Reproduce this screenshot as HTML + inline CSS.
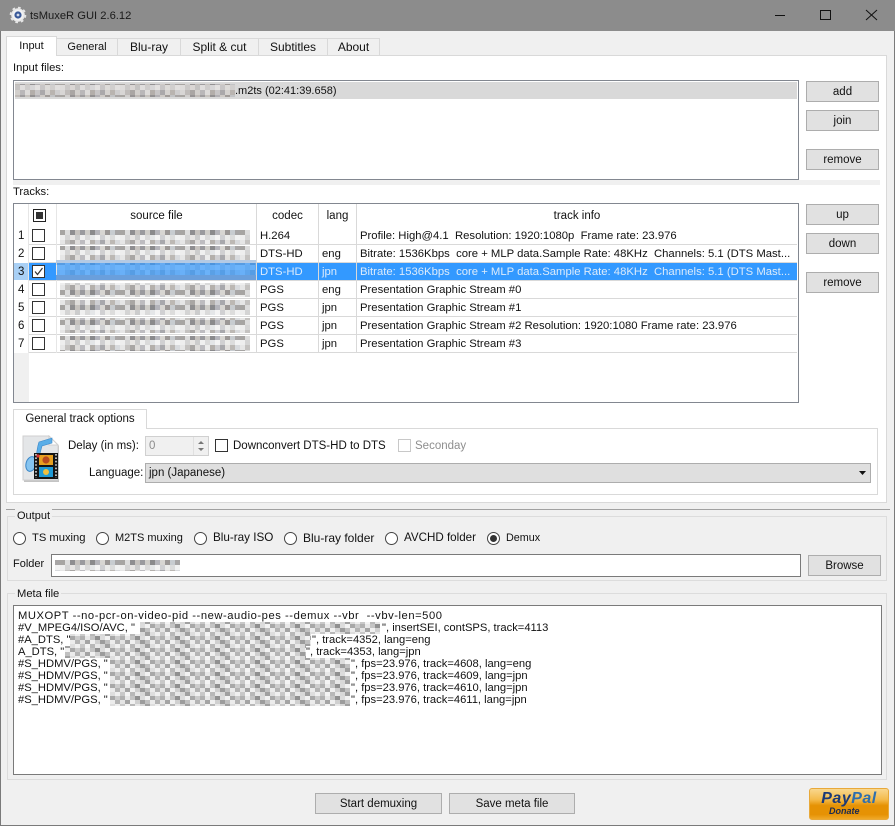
<!DOCTYPE html>
<html><head><meta charset="utf-8"><style>
html,body{margin:0;padding:0;width:895px;height:826px;overflow:hidden;background:#f0f0f0}
body{position:relative;font:11.5px/16px "Liberation Sans",sans-serif;color:#111}
div,span.t{position:absolute;box-sizing:border-box}
svg{position:absolute}
.t{white-space:nowrap;height:16px}
.g{font-size:11.3px}
.b{background:#e1e1e1;border:1px solid #adadad;text-align:center;line-height:21px;width:73px;height:21px}
.cb{width:13px;height:13px;border:1px solid #333;background:#fff}
.r{width:13px;height:13px;border:1px solid #444;border-radius:50%;background:#fff;top:532px}
.hl{height:1px;background:#d9d9d9;left:29px;width:768px}
.bg{background:#f0f0f0;border:1px solid #dcdcdc}
.tab{top:38px;height:18px;background:#f0f0f0;border:1px solid #d9d9d9;text-align:center;line-height:16px;font-size:12px}
.m{font-size:11.2px;line-height:14px;height:14px;left:18px}
.w{color:#dcebfb}
</style></head><body>
<!-- window frame and title -->
<div style="left:0;top:0;width:895px;height:826px;border:1px solid #7a7a7a;border-top:0"></div>
<div style="left:0;top:0;width:895px;height:31px;background:#8c8c8c"></div>
<svg style="left:9px;top:6px" width="18" height="18" viewBox="0 0 18 18"><circle cx="9" cy="9" r="6.8" fill="#e8e8e8" stroke="#e4e4e4" stroke-width="3" stroke-dasharray="2.5 2.8"/><circle cx="9" cy="9" r="5.4" fill="#f2f2f2"/><circle cx="9" cy="9" r="3.6" fill="#3a5a9a"/><circle cx="9" cy="9" r="1.4" fill="#d4dcec"/></svg>
<span class="t" style="left:30px;top:8px;font-size:11.2px;color:#1a1a1a;letter-spacing:0">tsMuxeR GUI 2.6.12</span>
<div style="left:775px;top:15px;width:10px;height:1px;background:#111"></div>
<div style="left:820px;top:10px;width:11px;height:10px;border:1px solid #111"></div>
<svg style="left:865px;top:9px" width="13" height="12"><path d="M1 1L12 11M12 1L1 11" stroke="#111" fill="none"/></svg>

<!-- tabs -->
<div style="left:6px;top:55px;width:881px;height:448px;background:#fff;border:1px solid #d9d9d9"></div>
<div class="tab" style="left:56px;width:62px;font-size:11px">General</div>
<div class="tab" style="left:117px;width:64px">Blu-ray</div>
<div class="tab" style="left:180px;width:79px">Split &amp; cut</div>
<div class="tab" style="left:258px;width:70px">Subtitles</div>
<div class="tab" style="left:327px;width:53px">About</div>
<div class="tab" style="left:6px;top:36px;width:51px;height:20px;background:#fff;border-bottom:0;line-height:18px;font-size:11px">Input</div>

<!-- input files -->
<span class="t" style="left:13px;top:60px;font-size:11.2px">Input files:</span>
<div style="left:13px;top:80px;width:786px;height:100px;border:1px solid #828790;background:#fff"></div>
<div style="left:15px;top:82px;width:782px;height:17px;background:#d9d9d9"></div>
<span class="t" style="left:235px;top:83px;font-size:11px">.m2ts (02:41:39.658)</span>
<div class="b" style="left:806px;top:81px">add</div>
<div class="b" style="left:806px;top:110px">join</div>
<div class="b" style="left:806px;top:149px">remove</div>
<div style="left:13px;top:180px;width:867px;height:5px;background:#f0f0f0"></div>

<!-- tracks -->
<span class="t" style="left:13px;top:184px;font-size:11.2px">Tracks:</span>
<div style="left:13px;top:203px;width:786px;height:200px;border:1px solid #828790;background:#fff"></div>
<div style="left:14px;top:353px;width:15px;height:49px;background:#f0f0f0"></div>
<div style="left:14px;top:263px;width:15px;height:17px;background:#a9d0f5"></div>
<div style="left:29px;top:263px;width:768px;height:17px;background:#3399ff"></div>
<div class="hl" style="top:244px"></div>
<div class="hl" style="top:262px"></div>
<div class="hl" style="top:280px"></div>
<div class="hl" style="top:298px"></div>
<div class="hl" style="top:316px"></div>
<div class="hl" style="top:334px"></div>
<div class="hl" style="top:352px"></div>
<div style="left:28px;top:204px;width:1px;height:149px;background:#e6e6e6"></div>
<div style="left:56px;top:204px;width:1px;height:149px;background:#e6e6e6"></div>
<div style="left:256px;top:204px;width:1px;height:149px;background:#d9d9d9"></div>
<div style="left:318px;top:204px;width:1px;height:149px;background:#d9d9d9"></div>
<div style="left:356px;top:204px;width:1px;height:149px;background:#d9d9d9"></div>
<div class="cb" style="left:33px;top:209px;border-color:#222"></div>
<div style="left:36px;top:212px;width:7px;height:7px;background:#333"></div>
<span class="t" style="left:57px;width:199px;text-align:center;top:208px">source file</span>
<span class="t" style="left:257px;width:61px;text-align:center;top:208px">codec</span>
<span class="t" style="left:319px;width:37px;text-align:center;top:208px">lang</span>
<span class="t" style="left:357px;width:440px;text-align:center;top:208px">track info</span>

<!-- pixelated redaction blocks -->
<svg style="left:0;top:0" width="895" height="826">
<defs>
<pattern id="p" patternUnits="userSpaceOnUse" width="60" height="15">
<rect width="60" height="15" fill="#d6d4d2"/>
<rect x="0" width="5" height="5" fill="#e6e6e6"/><rect x="5" width="5" height="5" fill="#c4c2c0"/><rect x="10" width="5" height="5" fill="#a9a6a4"/><rect x="15" width="5" height="5" fill="#dedcda"/><rect x="20" width="5" height="5" fill="#bdbcc0"/><rect x="25" width="5" height="5" fill="#ececec"/><rect x="30" width="5" height="5" fill="#b4b0ac"/><rect x="35" width="5" height="5" fill="#cfcfd2"/><rect x="40" width="5" height="5" fill="#a8a8ac"/><rect x="45" width="5" height="5" fill="#e2e0de"/><rect x="50" width="5" height="5" fill="#bcb8b4"/><rect x="55" width="5" height="5" fill="#d8dadd"/>
<rect x="0" y="5" width="5" height="5" fill="#a6a4a2"/><rect x="5" y="5" width="5" height="5" fill="#dcdcdc"/><rect x="10" y="5" width="5" height="5" fill="#8f8e90"/><rect x="15" y="5" width="5" height="5" fill="#c6c2be"/><rect x="20" y="5" width="5" height="5" fill="#9a9a9e"/><rect x="25" y="5" width="5" height="5" fill="#cfcdc9"/><rect x="30" y="5" width="5" height="5" fill="#8a8a8c"/><rect x="35" y="5" width="5" height="5" fill="#b4b4ba"/><rect x="40" y="5" width="5" height="5" fill="#d8d6d2"/><rect x="45" y="5" width="5" height="5" fill="#9c9896"/><rect x="50" y="5" width="5" height="5" fill="#c8ccd0"/><rect x="55" y="5" width="5" height="5" fill="#a8a6a6"/>
<rect x="0" y="10" width="5" height="5" fill="#eeeeee"/><rect x="5" y="10" width="5" height="5" fill="#d4d4d4"/><rect x="10" y="10" width="5" height="5" fill="#e8e6e4"/><rect x="15" y="10" width="5" height="5" fill="#cccccc"/><rect x="20" y="10" width="5" height="5" fill="#f0f0f0"/><rect x="25" y="10" width="5" height="5" fill="#dadada"/><rect x="30" y="10" width="5" height="5" fill="#e4e6e8"/><rect x="35" y="10" width="5" height="5" fill="#f4f4f4"/><rect x="40" y="10" width="5" height="5" fill="#d0d0d2"/><rect x="45" y="10" width="5" height="5" fill="#ececea"/><rect x="50" y="10" width="5" height="5" fill="#dcdcdc"/><rect x="55" y="10" width="5" height="5" fill="#f2f2f2"/>
</pattern>
<pattern id="q" patternUnits="userSpaceOnUse" width="40" height="12">
<rect width="40" height="12" fill="#d4d4d4"/>
<rect width="5" height="4" fill="#b0b0b0"/><rect x="5" width="5" height="4" fill="#e8e8e8"/><rect x="10" width="5" height="4" fill="#c4c4c4"/><rect x="15" width="5" height="4" fill="#909090"/><rect x="20" width="5" height="4" fill="#dcdcdc"/><rect x="25" width="5" height="4" fill="#f2f2f2"/><rect x="30" width="5" height="4" fill="#a8a8a8"/><rect x="35" width="5" height="4" fill="#cccccc"/>
<rect y="4" width="5" height="4" fill="#e4e4e4"/><rect x="5" y="4" width="5" height="4" fill="#a4a4a4"/><rect x="10" y="4" width="5" height="4" fill="#f0f0f0"/><rect x="15" y="4" width="5" height="4" fill="#d0d0d0"/><rect x="20" y="4" width="5" height="4" fill="#9c9c9c"/><rect x="25" y="4" width="5" height="4" fill="#c0c0c0"/><rect x="30" y="4" width="5" height="4" fill="#ececec"/><rect x="35" y="4" width="5" height="4" fill="#b4b4b4"/>
<rect y="8" width="5" height="4" fill="#c8c8c8"/><rect x="5" y="8" width="5" height="4" fill="#f4f4f4"/><rect x="10" y="8" width="5" height="4" fill="#b8b8b8"/><rect x="15" y="8" width="5" height="4" fill="#e8e8e8"/><rect x="20" y="8" width="5" height="4" fill="#d8d8d8"/><rect x="25" y="8" width="5" height="4" fill="#a0a0a0"/><rect x="30" y="8" width="5" height="4" fill="#dedede"/><rect x="35" y="8" width="5" height="4" fill="#f0f0f0"/>
</pattern>
</defs>
<rect x="15" y="84" width="220" height="13" fill="url(#p)"/>
<rect x="15" y="84" width="220" height="13" fill="#b0a8a2" opacity=".25"/>
<rect x="60" y="230" width="190" height="14" fill="url(#p)"/>
<rect x="60" y="246" width="190" height="15" fill="url(#p)"/>
<rect x="60" y="283" width="190" height="14" fill="url(#p)"/>
<rect x="60" y="300" width="190" height="15" fill="url(#p)"/>
<rect x="60" y="318" width="190" height="15" fill="url(#p)"/>
<rect x="60" y="336" width="190" height="15" fill="url(#p)"/>
<rect x="56" y="260" width="200" height="3" fill="#b4cae4"/>
<rect x="56" y="263" width="200" height="12" fill="url(#p)" opacity=".3"/>
<rect x="56" y="275" width="200" height="5" fill="#6a9fdc"/>
</svg>

<!-- row numbers -->
<span class="t" style="left:18px;top:228px">1</span><span class="t" style="left:18px;top:246px">2</span><span class="t" style="left:18px;top:264px">3</span><span class="t" style="left:18px;top:282px">4</span><span class="t" style="left:18px;top:300px">5</span><span class="t" style="left:18px;top:318px">6</span><span class="t" style="left:18px;top:336px">7</span>
<!-- row checkboxes -->
<div class="cb" style="left:32px;top:229px"></div><div class="cb" style="left:32px;top:247px"></div>
<div class="cb" style="left:32px;top:265px"></div>
<svg style="left:32px;top:265px" width="13" height="13"><path d="M3 6.5L5.5 9.5L10.5 3" stroke="#333" stroke-width="1.2" fill="none"/></svg>
<div class="cb" style="left:32px;top:283px"></div><div class="cb" style="left:32px;top:301px"></div><div class="cb" style="left:32px;top:319px"></div><div class="cb" style="left:32px;top:337px"></div>
<!-- codec -->
<span class="t g" style="left:260px;top:228px">H.264</span>
<span class="t g" style="left:260px;top:246px">DTS-HD</span>
<span class="t g w" style="left:260px;top:264px">DTS-HD</span>
<span class="t g" style="left:260px;top:282px">PGS</span>
<span class="t g" style="left:260px;top:300px">PGS</span>
<span class="t g" style="left:260px;top:318px">PGS</span>
<span class="t g" style="left:260px;top:336px">PGS</span>
<!-- lang -->
<span class="t g" style="left:322px;top:246px">eng</span>
<span class="t g w" style="left:322px;top:264px">jpn</span>
<span class="t g" style="left:322px;top:282px">eng</span>
<span class="t g" style="left:322px;top:300px">jpn</span>
<span class="t g" style="left:322px;top:318px">jpn</span>
<span class="t g" style="left:322px;top:336px">jpn</span>
<!-- info -->
<span class="t g" style="left:360px;top:228px">Profile: High@4.1&nbsp; Resolution: 1920:1080p&nbsp; Frame rate: 23.976</span>
<span class="t g" style="left:360px;top:246px">Bitrate: 1536Kbps&nbsp; core + MLP data.Sample Rate: 48KHz&nbsp; Channels: 5.1 (DTS Mast...</span>
<span class="t g w" style="left:360px;top:264px">Bitrate: 1536Kbps&nbsp; core + MLP data.Sample Rate: 48KHz&nbsp; Channels: 5.1 (DTS Mast...</span>
<span class="t g" style="left:360px;top:282px">Presentation Graphic Stream #0</span>
<span class="t g" style="left:360px;top:300px">Presentation Graphic Stream #1</span>
<span class="t g" style="left:360px;top:318px">Presentation Graphic Stream #2 Resolution: 1920:1080 Frame rate: 23.976</span>
<span class="t g" style="left:360px;top:336px">Presentation Graphic Stream #3</span>
<div class="b" style="left:806px;top:204px">up</div>
<div class="b" style="left:806px;top:233px">down</div>
<div class="b" style="left:806px;top:272px">remove</div>

<!-- general track options -->
<div style="left:13px;top:428px;width:865px;height:67px;border:1px solid #d9d9d9;background:#fff"></div>
<div style="left:13px;top:409px;width:134px;height:20px;border:1px solid #d9d9d9;border-bottom:0;background:#fff;text-align:center;line-height:18px;z-index:1">General track options</div>
<svg style="left:22px;top:435px" width="38" height="49" viewBox="0 0 38 49">
<path d="M2 2H28L37 11V47H2Z" fill="#c4c4c4"/>
<path d="M1 1H27L36 10V45H1Z" fill="#e4e6e8" stroke="#cfcfcf"/><path d="M27 1V10H36Z" fill="#fff" stroke="#cfcfcf"/>
<path d="M13 32C14 22 15 12 17 7L30 3V8L20 11C18 18 16 28 14 34" fill="#5aaee8" stroke="#3d88c8" stroke-width=".6"/>
<ellipse cx="9" cy="29" rx="5" ry="7.5" fill="#86c4f0" stroke="#3d88c8" transform="rotate(15 9 29)"/>
<rect x="12" y="18" width="24" height="26" fill="#151515"/>
<path d="M14 19V43M34 19V43" stroke="#ddd" stroke-width="1.6" stroke-dasharray="1.6 1.8"/>
<rect x="17" y="20" width="14" height="10" fill="#e8a020"/><rect x="17" y="32" width="14" height="10" fill="#1f9ad6"/>
<circle cx="24" cy="25" r="3.6" fill="#b84a1f"/><circle cx="24" cy="37" r="3" fill="#f0c040"/><circle cx="16" cy="21" r="1.6" fill="#d83030"/></svg>
<span class="t" style="left:68px;top:438px">Delay (in ms):</span>
<div style="left:145px;top:436px;width:64px;height:20px;background:#f0f0f0;border:1px solid #d0d0d0"></div>
<span class="t" style="left:149px;top:438px;color:#8c8c8c">0</span>
<div style="left:193px;top:437px;width:1px;height:18px;background:#e0e0e0"></div>
<svg style="left:194px;top:438px" width="14" height="16"><path d="M4 6L7 3L10 6ZM4 10L7 13L10 10Z" fill="#777"/></svg>
<div class="cb" style="left:215px;top:439px"></div>
<span class="t" style="left:233px;top:438px">Downconvert DTS-HD to DTS</span>
<div class="cb" style="left:398px;top:439px;border-color:#c8c8c8"></div>
<span class="t" style="left:415px;top:438px;color:#8e8e8e">Seconday</span>
<span class="t" style="left:89px;top:465px">Language:</span>
<div style="left:145px;top:463px;width:726px;height:20px;background:#dfdfdf;border:1px solid #adadad"></div>
<span class="t" style="left:149px;top:465px">jpn (Japanese)</span>
<svg style="left:858px;top:470px" width="9" height="6"><path d="M1 1H8L4.5 5Z" fill="#111"/></svg>

<!-- output group -->
<div style="left:6px;top:509px;width:884px;height:1px;background:#a0a0a0"></div>
<div class="bg" style="left:7px;top:516px;width:880px;height:65px"></div>
<span class="t" style="left:15px;top:508px;padding:0 2px;background:#f0f0f0;font-size:11px">Output</span>
<div class="r" style="left:13px"></div><span class="t" style="left:32px;top:530px;font-size:11.2px">TS muxing</span>
<div class="r" style="left:96px"></div><span class="t" style="left:115px;top:530px;font-size:11px">M2TS muxing</span>
<div class="r" style="left:194px"></div><span class="t" style="left:213px;top:530px;font-size:11.7px">Blu-ray ISO</span>
<div class="r" style="left:284px"></div><span class="t" style="left:303px;top:530px;font-size:12px">Blu-ray folder</span>
<div class="r" style="left:385px"></div><span class="t" style="left:404px;top:530px;font-size:11.6px">AVCHD folder</span>
<div class="r" style="left:487px"></div><div style="left:490px;top:535px;width:7px;height:7px;border-radius:50%;background:#333"></div><span class="t" style="left:506px;top:530px;font-size:10.8px">Demux</span>
<span class="t" style="left:13px;top:556px;font-size:11px">Folder</span>
<div style="left:51px;top:554px;width:750px;height:23px;background:#fff;border:1px solid #7a7a7a"></div>
<svg style="left:0;top:0" width="895" height="826"><rect x="55" y="560" width="125" height="11" fill="url(#p)"/></svg>
<div class="b" style="left:808px;top:555px">Browse</div>

<!-- meta file group -->
<div class="bg" style="left:7px;top:593px;width:880px;height:187px"></div>
<span class="t" style="left:15px;top:586px;padding:0 2px;background:#f0f0f0;font-size:11.2px">Meta file</span>
<div style="left:13px;top:605px;width:869px;height:170px;background:#fff;border:1px solid #7a7a7a"></div>
<svg style="left:0;top:0" width="895" height="826">
<rect x="140" y="622" width="240" height="12" fill="url(#q)"/>
<rect x="70" y="634" width="241" height="12" fill="url(#q)"/>
<rect x="65" y="646" width="241" height="12" fill="url(#q)"/>
<rect x="110" y="658" width="240" height="12" fill="url(#q)"/>
<rect x="110" y="670" width="240" height="12" fill="url(#q)"/>
<rect x="110" y="682" width="240" height="12" fill="url(#q)"/>
<rect x="110" y="694" width="240" height="12" fill="url(#q)"/>
</svg>
<span class="t m" style="top:609px;letter-spacing:.55px">MUXOPT --no-pcr-on-video-pid --new-audio-pes --demux --vbr&nbsp; --vbv-len=500</span>
<span class="t m" style="top:621px">#V_MPEG4/ISO/AVC, "</span><span class="t m" style="left:382px;top:621px">", insertSEI, contSPS, track=4113</span>
<span class="t m" style="top:633px">#A_DTS, "</span><span class="t m" style="left:312px;top:633px">", track=4352, lang=eng</span>
<span class="t m" style="top:645px">A_DTS, "</span><span class="t m" style="left:306px;top:645px">", track=4353, lang=jpn</span>
<span class="t m" style="top:657px">#S_HDMV/PGS, "</span><span class="t m" style="left:351px;top:657px">", fps=23.976, track=4608, lang=eng</span>
<span class="t m" style="top:669px">#S_HDMV/PGS, "</span><span class="t m" style="left:351px;top:669px">", fps=23.976, track=4609, lang=jpn</span>
<span class="t m" style="top:681px">#S_HDMV/PGS, "</span><span class="t m" style="left:351px;top:681px">", fps=23.976, track=4610, lang=jpn</span>
<span class="t m" style="top:693px">#S_HDMV/PGS, "</span><span class="t m" style="left:351px;top:693px">", fps=23.976, track=4611, lang=jpn</span>

<!-- bottom -->
<div class="b" style="left:315px;top:793px;width:127px">Start demuxing</div>
<div class="b" style="left:449px;top:793px;width:126px">Save meta file</div>
<div style="left:809px;top:788px;width:80px;height:32px;border:1px solid #e8a93a;border-radius:3px;background:linear-gradient(#f9d78e 0,#f4bb4c 35%,#e69204 55%,#e69204 85%,#f0a828 100%)"></div>
<span class="t" style="left:809px;width:80px;text-align:center;top:791px;height:16px;font:italic bold 16px/16px 'Liberation Sans',sans-serif;letter-spacing:.5px;color:#1c3a78">Pay<span style="color:#2f6fae">Pal</span></span>
<span class="t" style="left:829px;top:806px;height:11px;font:italic bold 9px/11px 'Liberation Sans',sans-serif;color:#1c2a50">Donate</span>
</body></html>
